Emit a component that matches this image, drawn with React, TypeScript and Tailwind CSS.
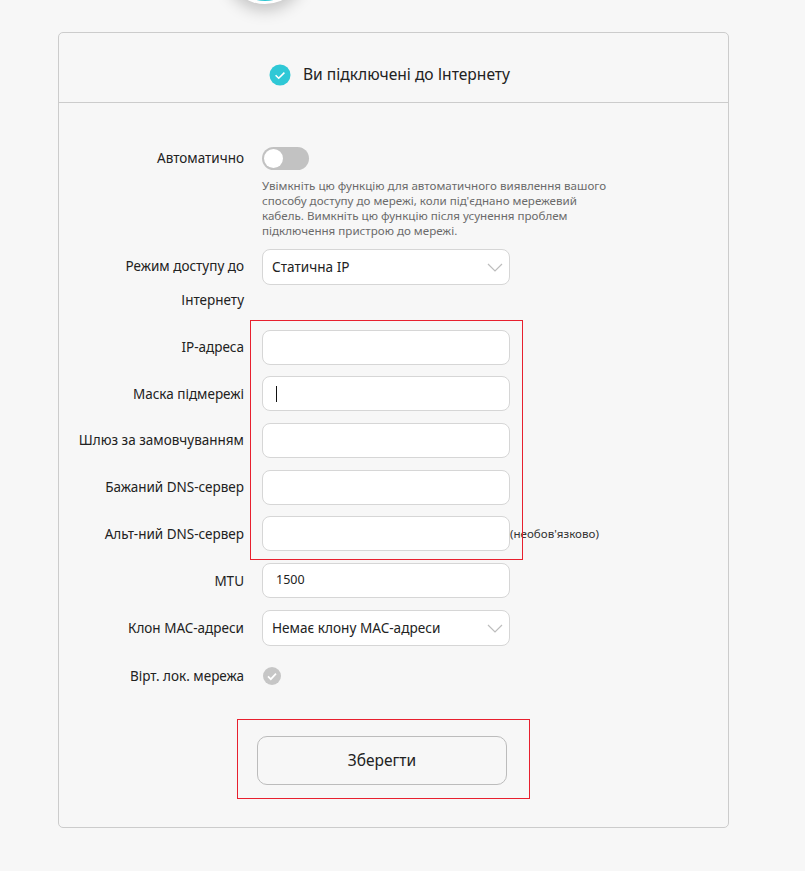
import React from 'react';

const fontStack = "font-['Noto_Sans','Open_Sans',sans-serif]";

const Chevron = () => (
  <svg width="16" height="9" viewBox="0 0 16 9" fill="none" className="absolute right-[6px] top-[13px]">
    <path d="M1 1l7 7 7-7" stroke="#bdbdbd" strokeWidth="1.2" />
  </svg>
);

const Row: React.FC<{ label: React.ReactNode; className?: string; children: React.ReactNode }> = ({ label, className, children }) => (
  <div className={`flex items-center ${className ?? ''}`}>
    <div className="w-[185px] text-right text-[13.5px] leading-[20px] text-[#222] whitespace-nowrap">{label}</div>
    <div className="ml-[18px] relative flex items-center">{children}</div>
  </div>
);

const TextBox: React.FC<{ children?: React.ReactNode }> = ({ children }) => (
  <div className="w-[248px] h-[35px] bg-white border border-[#d6d6d6] rounded-[8px] flex items-center pl-[13px] text-[12.5px] text-[#222]">
    {children}
  </div>
);

const SelectBox: React.FC<{ value: string }> = ({ value }) => (
  <div className="relative w-[248px] h-[36px] bg-white border border-[#d6d6d6] rounded-[8px] flex items-center pl-[9px] text-[13.6px] text-[#222]">
    {value}
    <Chevron />
  </div>
);

const App: React.FC = () => {
  return (
    <div className={`relative w-[805px] h-[871px] overflow-hidden bg-[#f7f7f7] ${fontStack}`}>
      {/* status circle cut off by the top of the page */}
      <div className="absolute left-[225px] top-[-76px] w-[80px] h-[80px] rounded-full bg-white shadow-[0_6px_16px_rgba(0,0,0,0.22)] flex items-center justify-center">
        <div className="w-[74px] h-[74px] rounded-full bg-[#2fc6d2]" />
      </div>

      <div className="absolute left-[58px] top-[32px] w-[671px] h-[796px] border border-[#cccccc] rounded-[5px]">
        <div className="h-[70px] border-b border-[#cccccc] flex items-center justify-center pt-[15px] pr-[8px]">
          <svg width="22" height="22" viewBox="0 0 22 22" className="mr-[12px]">
            <circle cx="11" cy="11" r="10.5" fill="#2fc8d6" />
            <path d="M6.6 11.2l3.1 3 5.7-5.6" fill="none" stroke="#fff" strokeWidth="1.6" />
          </svg>
          <span className="text-[15.6px] text-[#222]">Ви підключені до Інтернету</span>
        </div>

        <div className="pt-[44px]">
          <div className="flex items-start">
            <div className="w-[185px] text-right text-[13.5px] leading-[23px] text-[#222]">Автоматично</div>
            <div className="ml-[18px]">
              <div className="w-[47px] h-[23px] rounded-full bg-[#c2c2c2] flex items-center pl-[2px]">
                <div className="w-[19px] h-[19px] rounded-full bg-white" />
              </div>
              <p className="mt-[8px] w-[348px] text-[11.6px] leading-[15px] text-[#6b6b6b]">
                Увімкніть цю функцію для автоматичного виявлення вашого способу доступу до мережі, коли під'єднано мережевий кабель. Вимкніть цю функцію після усунення проблем підключення пристрою до мережі.
              </p>
            </div>
          </div>

          <div className="flex items-start mt-[11px]">
            <div className="w-[185px] text-right text-[13.5px] leading-[34px] text-[#222]">
              Режим доступу до
              <br />
              Інтернету
            </div>
            <div className="ml-[18px]">
              <SelectBox value="Статична IP" />
            </div>
          </div>

          <div className="flex flex-col gap-[11.7px] mt-[12.6px]">
            <Row label="IP-адреса"><TextBox /></Row>
            <Row label="Маска підмережі">
              <TextBox><span className="w-px h-[16px] bg-[#111]" /></TextBox>
            </Row>
            <Row label="Шлюз за замовчуванням"><TextBox /></Row>
            <Row label="Бажаний DNS-сервер"><TextBox /></Row>
            <Row label="Альт-ний DNS-сервер">
              <TextBox />
              <span className="text-[11.6px] text-[#333] whitespace-nowrap">(необов'язково)</span>
            </Row>
            <Row label="MTU"><TextBox>1500</TextBox></Row>
            <Row label="Клон MAC-адреси"><SelectBox value="Немає клону MAC-адреси" /></Row>
          </div>

          <Row label="Вірт. лок. мережа" className="mt-[20px]">
            <svg width="18" height="18" viewBox="0 0 18 18" className="ml-[1px]">
              <circle cx="9" cy="9" r="9" fill="#c6c6c6" />
              <path d="M5 9.4l2.8 2.8 5.2-5.6" fill="none" stroke="#fff" strokeWidth="1.7" />
            </svg>
          </Row>

          <div className="mt-[50px] ml-[198px] w-[250px] h-[49px] border border-[#bcbcbc] rounded-[10px] flex items-center justify-center text-[15.5px] text-[#222]">
            Зберегти
          </div>
        </div>
      </div>

      {/* red annotation boxes */}
      <div className="absolute left-[250px] top-[320px] w-[273px] h-[240px] border border-[#e8202e]" />
      <div className="absolute left-[237px] top-[719px] w-[293px] h-[80px] border border-[#e8202e]" />
    </div>
  );
};

export default App;
